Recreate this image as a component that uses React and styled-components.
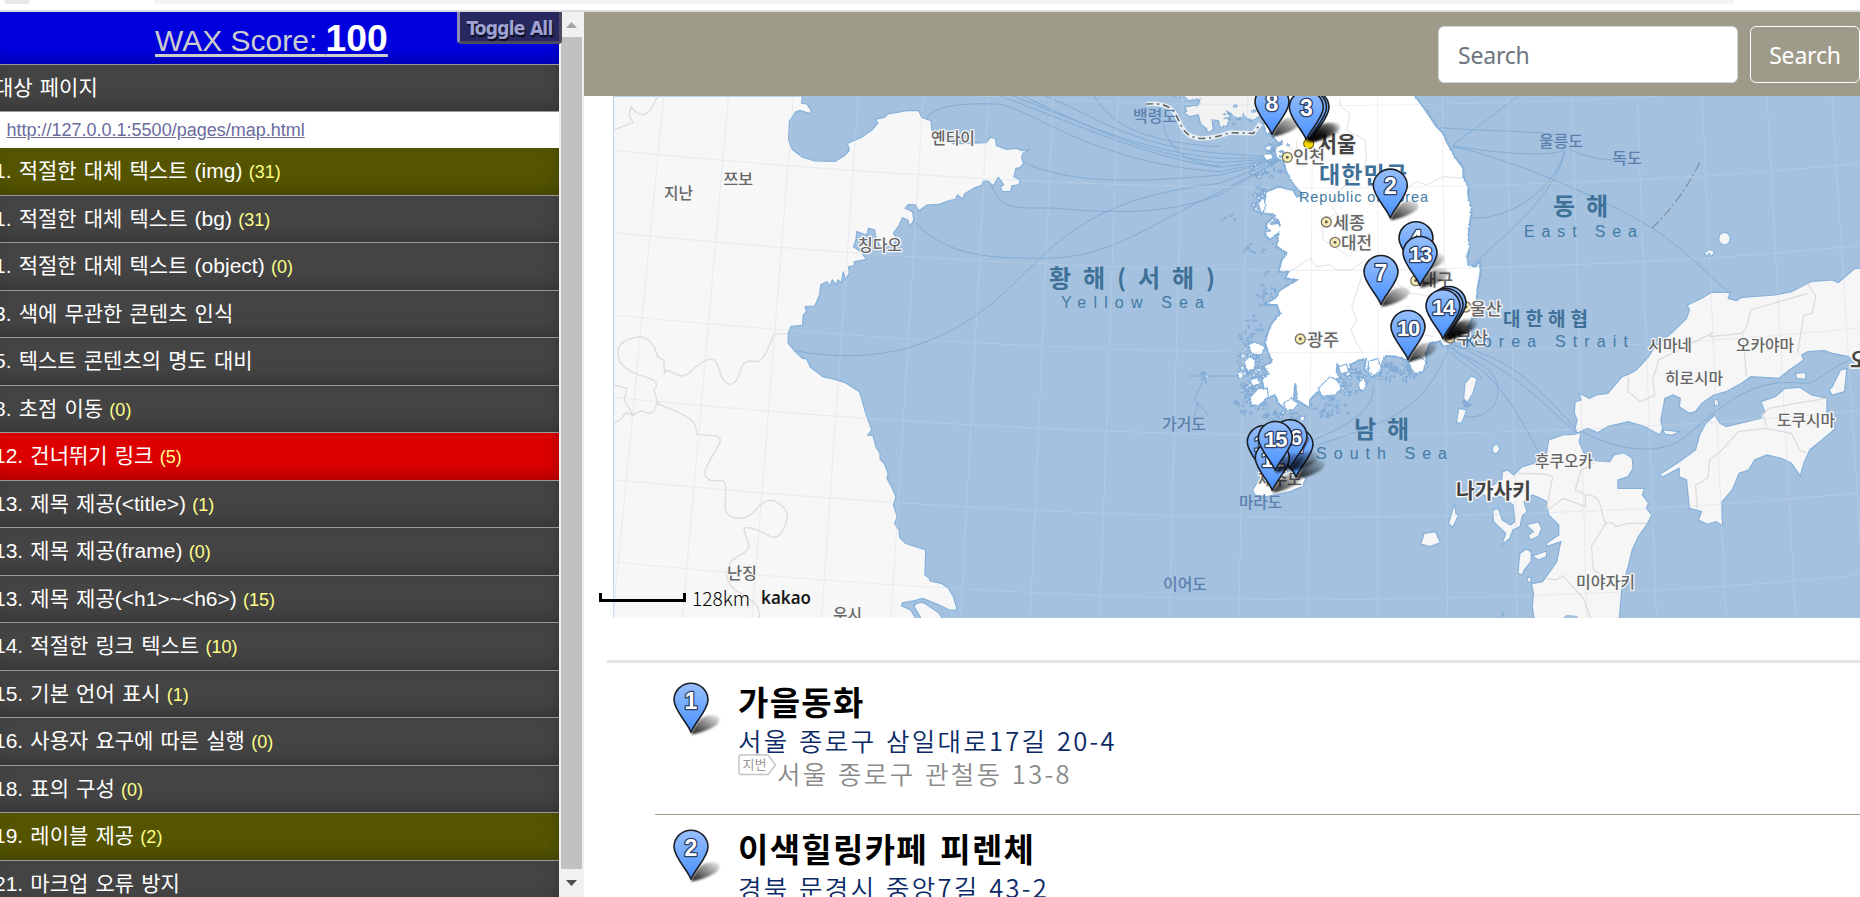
import React from 'react';
import styled, { createGlobalStyle } from 'styled-components';

const GlobalStyle = createGlobalStyle`
  * { box-sizing: border-box; }
  body { margin: 0; background: #fff; overflow: hidden; }
  h2, p { margin: 0; }
`;

const SANS = `"Liberation Sans", "Noto Sans CJK KR", sans-serif`;
const UI = `"Noto Sans", "Noto Sans CJK KR", sans-serif`;
const KR = `"Noto Sans CJK KR", sans-serif`;

/* ---------- frame ---------- */

const Page = styled.div`
  display: flex;
  flex-direction: column;
  width: 1860px;
  height: 897px;
  overflow: hidden;
`;

const BrowserEdge = styled.div`
  flex: none;
  display: flex;
  align-items: flex-start;
  gap: 124px;
  height: 12px;
  padding-left: 4px;
  border-bottom: 2px solid #dadce0;
`;

const ChromeShape = styled.div`
  width: ${(p) => p.$width}px;
  height: 4px;
  background: ${(p) => p.$color};
  border-radius: 0 0 ${(p) => p.$radius}px ${(p) => p.$radius}px;
`;

const Panes = styled.div`
  flex: 1;
  display: flex;
  min-height: 0;
`;

/* ---------- report panel ---------- */

const Report = styled.aside`
  position: relative;
  flex: none;
  width: 559px;
  overflow: visible;
  font-family: ${SANS};
`;

const ReportClip = styled.div`
  height: 885px;
  overflow: hidden;
`;

const inner = `box-shadow: inset -4px -8px 16px -4px rgba(0, 0, 0, 0.25);`;

const ScoreBar = styled.div`
  height: 53px;
  border-bottom: 1px solid #999;
  background: #0000df;
  ${inner}
  padding-left: 155px;
  color: #ccc;
  font-size: 30px;
  line-height: 52px;
  white-space: pre;
`;

const ScoreText = styled.span`
  text-decoration: underline;
  text-decoration-thickness: 3px;
  text-underline-offset: 3px;
  text-decoration-skip-ink: none;
`;

const ScoreValue = styled.strong`
  color: #fff;
  font-size: 37.3px;
`;

const ToggleAll = styled.button`
  position: absolute;
  top: 0;
  right: -3px;
  width: 105px;
  height: 32px;
  padding: 2px 0 0;
  border: 3px outset #8c8cb4;
  border-top: 0;
  border-radius: 0 0 4px 4px;
  background: #26285e;
  color: #9fa1d2;
  font: bold 19px/26px "DejaVu Sans Condensed", "DejaVu Sans", sans-serif;
  letter-spacing: -0.75px;
  white-space: nowrap;
  text-shadow: 1px 2px 1px #08081c;
  z-index: 2;
`;

const rowColors = { normal: '#444', warn: '#550', fail: '#d00' };

const Row = styled.div`
  height: ${(p) => (p.$head ? 47 : 47.5)}px;
  border-bottom: 1px solid #999;
  background: ${(p) => rowColors[p.$tone || 'normal']};
  ${inner}
  text-indent: -6px;
  color: #fff;
  font-size: 21px;
  line-height: 46px;
  word-spacing: 1.3px;
  white-space: pre;
`;

const Count = styled.span`
  color: #ffff88;
  font-size: 18px;
`;

const UrlRow = styled.div`
  height: 36.4px;
  padding-left: 6.5px;
  font-size: 18px;
  line-height: 36px;
`;

const UrlLink = styled.a`
  color: #6b6b9e;
  text-decoration: underline;
`;

const ScrollBar = styled.div`
  flex: none;
  display: flex;
  flex-direction: column;
  align-items: center;
  width: 25px;
  background: #f1f1f1;
`;

const ScrollArrow = styled.div`
  height: ${(p) => p.$height}px;
  display: flex;
  align-items: center;
  justify-content: center;
`;

const Thumb = styled.div`
  flex: 1;
  width: 21px;
  background: #c1c1c1;
`;

/* ---------- page content ---------- */

const Content = styled.main`
  flex: 1;
  min-width: 0;
  display: flex;
  flex-direction: column;
`;

const NavBar = styled.header`
  flex: none;
  height: 84px;
  background: #9f9b8a;
  display: flex;
  justify-content: flex-end;
  align-items: flex-start;
  gap: 12px;
  padding-top: 14px;
  font-family: ${UI};
  font-size: 23px;
`;

const SearchField = styled.input`
  width: 300px;
  height: 57px;
  padding: 0 19px;
  border: 1px solid #ced4da;
  border-radius: 6px;
  background: #fff;
  font: inherit;
  letter-spacing: -0.2px;
  &::placeholder { color: #6c757d; opacity: 1; }
`;

const SearchButton = styled.button`
  width: 110px;
  height: 57px;
  padding: 0;
  border: 1px solid #fff;
  border-radius: 6px;
  background: transparent;
  color: #fff;
  font: inherit;
  letter-spacing: -0.2px;
`;

const MapCanvas = styled.svg`
  flex: none;
  display: block;
  width: 1276px;
  height: 522px;
`;

const PlaceList = styled.section`
  flex: none;
  margin: 42px 0 0 23px;
  padding-left: 48px;
  border-top: 3px solid #e6e6e0;
`;

const Place = styled.article`
  display: flex;
  align-items: flex-start;
  height: ${(p) => (p.$first ? 152 : 147)}px;
  padding: ${(p) => (p.$first ? 17 : 12)}px 0 0 16px;
  border-bottom: 1px solid #9f9b8a;
  font-family: ${KR};
`;

const PinIcon = styled.svg`
  flex: none;
  width: 52px;
  height: 56px;
  margin-right: 15px;
  overflow: visible;
`;

const PlaceInfo = styled.div`
  display: flex;
  flex-direction: column;
`;

const PlaceName = styled.h2`
  font-size: 33px;
  font-weight: 700;
  line-height: 42px;
  letter-spacing: 1.3px;
  word-spacing: 3.5px;
  white-space: nowrap;
  color: #000;
`;

const RoadAddress = styled.p`
  font-size: 25.5px;
  line-height: 35px;
  letter-spacing: 2.3px;
  word-spacing: 1.6px;
  font-weight: 350;
  white-space: nowrap;
  color: #0b2a66;
`;

const LotAddress = styled(RoadAddress)`
  display: flex;
  line-height: 32px;
  color: #8a8a8a;
`;

const LotTag = styled.svg`
  width: 39px;
  height: 22px;
  margin-top: -3px;
`;

/* ---------- data ---------- */

const checks = [
  { label: '1. 적절한 대체 텍스트 (img)', count: 31, tone: 'warn' },
  { label: '1. 적절한 대체 텍스트 (bg)', count: 31 },
  { label: '1. 적절한 대체 텍스트 (object)', count: 0 },
  { label: '3. 색에 무관한 콘텐츠 인식' },
  { label: '5. 텍스트 콘텐츠의 명도 대비' },
  { label: '8. 초점 이동', count: 0 },
  { label: '12. 건너뛰기 링크', count: 5, tone: 'fail' },
  { label: '13. 제목 제공(<title>)', count: 1 },
  { label: '13. 제목 제공(frame)', count: 0 },
  { label: '13. 제목 제공(<h1>~<h6>)', count: 15 },
  { label: '14. 적절한 링크 텍스트', count: 10 },
  { label: '15. 기본 언어 표시', count: 1 },
  { label: '16. 사용자 요구에 따른 실행', count: 0 },
  { label: '18. 표의 구성', count: 0 },
  { label: '19. 레이블 제공', count: 2, tone: 'warn' },
  { label: '21. 마크업 오류 방지' },
];

const places = [
  { no: 1, name: '가을동화', road: '서울 종로구 삼일대로17길 20-4', lot: '서울 종로구 관철동 13-8' },
  { no: 2, name: '이색힐링카페 피렌체', road: '경북 문경시 중앙7길 43-2' },
];

/* text, left, right, bottom, size, kind */
const labels = [
  ['지난', 664, 693, 201, 16, 'town'],
  ['쯔보', 723.5, 753, 187, 16, 'town'],
  ['옌타이', 931, 975, 146, 16, 'town'],
  ['칭다오', 858, 902, 253, 16, 'town'],
  ['백령도', 1133, 1177, 124, 16, 'isle'],
  ['황 해 ( 서 해 )', 1049, 1215, 289, 24, 'sea'],
  ['Yellow Sea', 1061, 1204, 307.5, 16, 'seaEn'],
  ['서울', 1318, 1356, 154, 22, 'city'],
  ['인천', 1293, 1325, 165, 17, 'town'],
  ['대한민국', 1319, 1407, 185, 23, 'sea'],
  ['Republic of Korea', 1299, 1428, 202, 14.5, 'seaEn'],
  ['세종', 1333, 1365, 231, 17, 'town'],
  ['대전', 1341, 1372, 251, 17, 'town'],
  ['대구', 1421, 1453, 288, 17, 'town'],
  ['울산', 1470, 1502, 317, 17, 'town'],
  ['부산', 1456, 1488, 346, 17, 'town'],
  ['광주', 1307, 1339, 347.5, 17, 'town'],
  ['대한해협', 1503, 1588, 328, 19, 'sea'],
  ['Korea Strait', 1465, 1628, 347, 16, 'seaEn'],
  ['울릉도', 1539, 1583, 149, 16, 'isle'],
  ['독도', 1612, 1642, 166, 16, 'isle'],
  ['동 해', 1553, 1608, 217, 24, 'sea'],
  ['East Sea', 1524, 1637, 236.7, 16, 'seaEn'],
  ['시마네', 1648, 1692, 353, 16, 'town'],
  ['오카야마', 1736, 1794, 353, 16, 'town'],
  ['히로시마', 1665, 1723, 386, 16, 'town'],
  ['오사카', 1850, 1905, 370, 20, 'city'],
  ['도쿠시마', 1777, 1835, 427.5, 16, 'town'],
  ['후쿠오카', 1535, 1593, 469, 16, 'town'],
  ['나가사키', 1456, 1531, 500.5, 21, 'city'],
  ['미야자키', 1576, 1635, 590, 16, 'town'],
  ['남 해', 1354, 1409, 440, 24, 'sea'],
  ['South Sea', 1316, 1447, 459, 16, 'seaEn'],
  ['제주도', 1258, 1302, 487, 16, 'town'],
  ['마라도', 1239, 1282, 510, 16, 'isle'],
  ['가거도', 1162, 1206, 432, 16, 'isle'],
  ['이어도', 1163, 1207, 592, 16, 'isle'],
  ['난징', 727, 757, 581, 16, 'town'],
  ['우시', 833, 862, 622, 16, 'town'],
];

const labelKinds = {
  town: { fill: '#666', halo: '#f8f8f8', weight: 500, haloWidth: 2.5 },
  city: { fill: '#444', halo: '#f8f8f8', weight: 700, haloWidth: 3 },
  isle: { fill: '#5b80ad', halo: 'none', weight: 500, haloWidth: 0 },
  sea: { fill: '#3f7098', halo: 'none', weight: 700, haloWidth: 0 },
  seaEn: { fill: '#437aa5', halo: 'none', weight: 400, haloWidth: 0 },
};

const towns = [[1287.3, 157.3], [1326.3, 222], [1335, 242.3], [1415.7, 280.7], [1300.3, 339], [1466, 307], [1450, 338]];

const pins = [
  [1272, 135.7, 8], [1312, 141, 9], [1309.5, 141, 1], [1306.3, 141, 3], [1390.3, 219.3, 2], [1416, 272, 4],
  [1420, 286.7, 13], [1381, 305.7, 7], [1449, 336.7, 6], [1446, 338.7, 5], [1443, 340, 14], [1408, 360.7, 10],
  [1264.3, 475.7, 11], [1296, 478.3, 17], [1290, 470, 16], [1272.3, 491.7, 12], [1275.3, 471.7, 15],
];

/* ---------- map geometry ---------- */

const china = `M82 48 L545 48 L543 70 L556 72 L567 93 L562 101 L540 91 L528 96 L513 125 L511 180 L520 208 L545 232 L575 243 L625 244 L650 225 L660 210 L655 190 L690 172 L715 150 L730 128 L722 118 L745 112 L755 102 L800 92 L830 92 L837 112 L860 122 L862 150 L885 168 L915 192 L995 188 L1005 172 L1018 175 L1020 197 L1045 208 L1070 205 L1083 212 L1103 208 L1085 220 L1082 232 L1086 252 L1078 263 L1068 265 L1063 290 L1078 300 L1076 314 L1058 318 L1055 335 L1035 335 L1030 320 L1038 314 L1025 292 L1012 318 L1000 303 L988 303 L985 315 L965 325 L942 342 L938 358 L925 345 L920 358 L905 362 L880 373 L850 375 L830 393 L822 375 L805 373 L797 385 L815 395 L818 420 L808 440 L803 420 L790 413 L780 440 L768 460 L775 475 L770 490 L745 500 L735 498 L725 475 L722 450 L707 445 L702 465 L678 455 L676 480 L670 500 L688 515 L702 538 L672 545 L672 557 L658 560 L660 580 L650 598 L645 575 L640 608 L632 600 L628 615 L618 600 L612 618 L605 605 L590 615 L587 645 L575 678 L552 680 L555 695 L547 705 L545 735 L517 740 L510 760 L510 790 L525 812 L545 835 L555 837 L565 862 L595 890 L615 895 L650 908 L685 935 L700 1000 L715 1050 L705 1065 L718 1067 L725 1100 L735 1120 L735 1137 L745 1150 L755 1180 L752 1195 L765 1225 L774 1250 L768 1275 L777 1310 L771 1330 L782 1350 L783 1372 L797 1390 L847 1410 L845 1485 L856 1495 L858 1503 L885 1510 L903 1525 L915 1550 L924 1590 L905 1590 L880 1575 L840 1555 L820 1562 L790 1568 L788 1578 L810 1590 L825 1620 L82 1620 Z M818 1578 Q830 1562 845 1570 L880 1600 L890 1620 L838 1620 Z`;

const chinaBorders = `M190 48 C170 110 150 120 125 80 L120 105 L130 128 L82 150 M510 760 L475 763 C460 810 450 845 430 845 C380 830 400 910 368 913 C330 900 350 830 315 838 C280 850 270 890 250 888 C225 885 215 860 207 878 L205 840 L190 830 C180 780 160 770 143 770 C130 775 90 780 93 820 C95 850 110 865 120 870 C140 890 175 890 185 905 C195 930 175 920 182 935 L190 965 L180 995 C165 1010 160 990 148 993 L130 1005 L108 960 L115 925 L82 915 M130 1005 L112 998 L100 1018 L82 1032 M190 970 C240 1000 290 1010 285 1063 C330 1070 350 1060 342 1090 C320 1140 300 1170 308 1190 C325 1220 355 1180 357 1220 C360 1270 340 1310 390 1315 C430 1315 430 1270 460 1262 C480 1255 515 1290 507 1320 C495 1370 480 1380 460 1365 C430 1345 400 1335 402 1350 C410 1390 425 1400 400 1420 C350 1445 350 1500 380 1530 C420 1560 445 1570 438 1620`;

const westRoutes = `M850 115 C870 70 960 70 1020 72 C1100 78 1250 250 1568 275 L1715 238 M1030 48 C1150 100 1400 240 1568 262 L1715 236 M1060 48 C1200 110 1350 210 1568 235 L1715 234 M1085 48 C1230 130 1380 225 1568 248 L1715 235 M1140 48 C1250 100 1350 200 1568 220 L1715 232 M1260 48 C1300 140 1400 190 1568 200 M1430 135 C1440 200 1480 250 1568 258 M1088 248 C1200 310 1350 310 1568 285 L1715 240 M1005 310 C1040 400 1060 380 1170 385 C1350 405 1450 395 1568 345 L1715 240 M820 425 C900 530 1000 535 1140 535 C1300 535 1400 430 1568 335 L1715 242 M525 812 C700 850 850 820 1000 680 C1150 530 1200 360 1568 310 L1715 240 M1490 888 L1700 888 M1530 890 L1505 960 L1540 1005 M1515 965 L1505 1010`;

const eastRoutes = `M732 48 L570 195 M540 143 C650 155 750 150 830 165 M570 197 C650 215 800 235 845 210 M570 200 C700 230 950 360 1060 445 C1150 520 1200 590 1250 640 M845 215 C800 380 650 430 610 410 M845 215 C820 350 700 460 620 555 M860 210 Q900 235 960 240 M560 800 C640 870 680 880 780 1115 M570 795 C700 850 780 960 875 1060 M575 795 C740 840 800 960 880 1055 M565 800 C620 850 690 860 680 950 C670 1000 630 1015 605 1010 M560 805 C500 1000 400 1030 240 1095 M555 802 C590 860 640 870 640 900 M1600 820 C1500 840 1470 915 1430 910 C1300 890 1230 980 1150 1060 C1100 1120 1000 1130 880 1050 M375 920 C380 1000 300 1040 230 1080`;

const honshu = `M1600 560 L1555 566 L1515 608 L1500 600 L1450 604 L1400 635 L1360 645 L1280 652 L1265 662 L1245 655 L1250 637 L1205 637 L1180 655 L1145 675 L1150 690 L1143 715 L1110 755 L1065 800 L1050 830 L1020 870 L1000 883 L985 890 L950 940 L922 945 L905 955 L880 940 L885 960 L870 965 L868 1000 L875 1020 L870 1045 L875 1060 L900 1045 L925 1058 L950 1040 L1000 1025 L1040 1040 L1078 1065 L1085 1045 L1080 1020 L1090 955 L1110 945 L1128 955 L1125 980 L1150 1000 L1165 995 L1180 970 L1210 945 L1240 935 L1280 908 L1300 890 L1370 895 L1395 870 L1430 840 L1425 825 L1440 815 L1480 812 L1500 820 L1540 830 L1555 850 L1600 855 Z`;
const shikoku = `M1212 1005 L1225 1030 L1240 1040 L1325 1015 L1335 995 L1325 965 L1360 950 L1385 925 L1420 922 L1450 945 L1487 955 L1487 1000 L1508 1045 L1475 1080 L1445 1110 L1430 1150 L1422 1188 L1400 1150 L1375 1135 L1340 1125 L1310 1140 L1295 1170 L1272 1180 L1255 1230 L1230 1265 L1230 1310 L1232 1337 L1215 1325 L1195 1333 L1172 1320 L1180 1295 L1150 1285 L1143 1200 L1125 1190 L1125 1165 L1085 1190 L1075 1185 L1125 1145 L1165 1110 L1175 1065 L1190 1030 Z`;
const kyushu = `M885 1057 L880 1085 L890 1115 L900 1135 L925 1143 L955 1145 L965 1125 L990 1118 L1010 1135 L1012 1165 L1000 1190 L975 1200 L975 1225 L1000 1225 L1040 1225 L1035 1245 L1050 1270 L1045 1285 L1058 1305 L1045 1335 L1025 1370 L1010 1410 L1000 1460 L985 1520 L978 1620 L770 1620 L765 1580 L768 1540 L763 1512 L790 1505 L805 1480 L825 1445 L835 1385 L800 1400 L800 1390 L830 1365 L830 1335 L805 1305 L800 1265 L785 1255 L765 1245 L745 1265 L752 1295 L740 1310 L735 1340 L718 1350 L710 1375 L690 1395 L700 1360 L670 1325 L668 1290 L682 1285 L692 1320 L712 1335 L722 1325 L718 1275 L690 1250 L660 1255 L625 1230 L665 1218 L690 1200 L692 1175 L705 1170 L720 1185 L740 1160 L770 1150 L800 1120 L805 1080 L840 1065 L865 1063 Z`;
const islets = `M500 1360 L528 1355 L540 1388 L515 1400 L492 1392Z M575 1270 L578 1300 L585 1305 L570 1342 L560 1330 L566 1305Z M750 1335 L780 1325 L788 1345 L780 1370 L760 1380 L755 1365 L768 1355Z M735 1420 L750 1407 L763 1415 L762 1445 L745 1470 L740 1485 L730 1480 L732 1450Z M765 1428 L800 1413 L800 1430 L780 1440Z M752 1492 L762 1492 L762 1507 L755 1507Z M600 910 L615 888 L630 895 L620 940 L605 970 L597 955Z M585 985 L605 990 L592 1030 L579 1028Z M668 1100 L678 1090 L686 1108 L676 1123 L667 1115Z M1500 920 L1520 870 L1536 865 L1530 935 L1500 945 L1492 930Z M1410 880 L1435 877 L1435 898 L1412 895Z M1085 1050 L1105 1052 L1125 1055 L1108 1066 L1090 1062Z M1210 960 L1220 958 L1222 975 L1212 978Z M1186 518 L1200 508 L1212 515 L1205 530 L1198 520 L1193 530Z M686 1620 L695 1595 L694 1613Z`;
const eastBorders = `M1440 610 L1460 650 L1450 700 L1430 705 L1415 820 M1440 640 L1300 690 L1290 740 L1280 760 L1290 890 M1280 760 L1200 770 L1205 760 L1140 800 L1075 840 L1060 900 L1065 945 L1030 965 L1000 935 L1000 890 M1325 1010 L1345 985 L1410 970 L1487 955 M1340 1040 L1330 1005 M1335 1045 L1270 1055 L1230 1110 L1200 1140 L1195 1195 L1165 1215 L1170 1290 M1335 1045 L1400 1060 L1420 1110 L1440 1120 M730 1180 L795 1182 L815 1190 L800 1290 M805 1290 L840 1255 L895 1280 L895 1245 L870 1230 L885 1170 L925 1143 M895 1245 C940 1240 930 1300 945 1330 L960 1328 L970 1340 L1000 1330 L1045 1330 M945 1330 L910 1400 L915 1470 L930 1480 M800 1495 L825 1500 L840 1487 L890 1555 L910 1620`;

const northKorea = `M60 10 L80 22 L100 18 L115 32 L150 28 L145 45 L105 50 L110 65 L100 68 L120 80 L145 75 L150 98 L178 128 L190 118 L186 90 L205 92 L210 112 L232 106 L240 80 L230 62 L260 85 L285 80 L300 95 L345 70 L345 10 Z`;
const southKorea = `M345 10 L790 10 L830 65 L860 110 L880 130 L890 155 L915 200 L940 235 L940 260 L955 290 L955 320 L965 355 L960 400 L955 440 L960 470 L952 500 L955 525 L975 530 L990 515 L992 545 L982 600 L980 640 L965 690 L940 740 L900 765 L880 770 L870 755 L840 760 L828 790 L832 830 L812 850 L790 836 L775 838 L780 815 L740 800 L705 798 L697 820 L690 855 L665 862 L642 835 L648 808 L625 812 L600 825 L608 850 L590 862 L562 825 L560 845 L582 880 L572 905 L545 915 L520 925 L503 905 L480 930 L480 955 L440 930 L436 880 L430 945 L405 958 L385 940 L375 915 L350 925 L330 945 L298 930 L310 905 L340 890 L335 865 L355 850 L340 830 L365 815 L355 790 L345 760 L350 735 L365 700 L390 670 L380 645 L335 645 L375 625 L390 600 L440 570 L405 565 L415 545 L385 545 L395 510 L410 490 L380 470 L385 430 L360 450 L345 435 L350 400 L375 375 L340 370 L310 360 L325 330 L350 305 L385 290 L430 300 L440 320 L460 315 L435 290 L410 250 L400 215 L380 205 L370 170 L390 165 L360 130 L345 100 Z`;
const coastalIsles = `M298 925 L325 895 L352 895 L355 920 L330 945 L305 945Z M282 815 L300 800 L318 812 L312 838 L292 842Z M295 765 L315 755 L345 770 L335 795 L305 790Z M262 848 L275 842 L280 862 L266 866Z M300 870 L322 862 L330 882 L308 888Z M400 940 L425 925 L445 940 L430 960 L405 958Z M505 895 L540 860 L560 870 L575 895 L555 915 L515 918Z M625 880 L640 862 L650 885 L640 902 L628 898Z M565 830 L590 822 L596 846 L572 852Z M775 815 L805 800 L828 812 L820 845 L790 850Z M655 815 L685 805 L695 840 L672 858 L655 842Z M450 980 L465 978 L462 992 L450 990Z M338 195 L362 190 L370 205 L350 212Z M345 170 L365 165 L362 180 L348 182Z M325 340 L340 322 L348 350 L335 375Z M340 100 L362 95 L368 120 L350 135Z`;
const koreaBorders = `M570 25 L572 50 L600 70 L590 120 L645 150 L650 200 L640 240 L570 300 L545 350 L560 370 L515 395 L520 450 L600 500 L620 455 L640 440 M440 150 L440 190 L410 165 M720 290 L770 295 L800 275 L830 285 L880 260 L940 265 M420 545 L450 525 L480 505 L500 530 L540 525 L560 540 L600 540 L640 515 M635 560 L605 650 L620 690 L603 720 L620 760 L640 790 M740 580 L780 610 L860 620 M800 730 L850 740`;
const jeju = `M308 1200 L320 1180 L350 1160 L400 1145 L450 1150 L468 1165 L455 1190 L420 1205 L350 1220 L315 1215 Z`;

/* Deterministic scatter of small islands along the coast: cx, cy, rx, ry, count, size */
const clusters = [
  [300, 840, 42, 85, 60, 8], [300, 945, 50, 28, 26, 5], [400, 980, 60, 22, 26, 5], [540, 955, 60, 35, 26, 5],
  [605, 875, 45, 42, 30, 6], [740, 845, 70, 34, 44, 5], [305, 730, 38, 55, 18, 4], [345, 600, 34, 55, 18, 4],
  [310, 480, 35, 25, 10, 3], [325, 330, 25, 40, 20, 6], [345, 240, 50, 26, 24, 5], [385, 175, 35, 30, 16, 5],
  [240, 380, 50, 12, 6, 3], [163, 860, 12, 22, 8, 4], [270, 75, 60, 30, 10, 4], [370, 420, 20, 50, 10, 5],
  [945, 940, 18, 12, 8, 4],
];
const scatter = (() => {
  let seed = 41;
  const rnd = () => {
    seed = (seed * 16807) % 2147483647;
    return seed / 2147483647;
  };
  const out = [];
  clusters.forEach(([cx, cy, rx, ry, n, s]) => {
    for (let i = 0; i < n; i += 1) {
      const a = rnd() * Math.PI * 2;
      const r = Math.sqrt(rnd());
      const x = cx + Math.cos(a) * r * rx;
      const y = cy + Math.sin(a) * r * ry;
      const w = s * (0.4 + rnd() * 1.1);
      const h = s * (0.4 + rnd() * 1.1);
      out.push(`M${(x - w).toFixed(1)} ${y.toFixed(1)}l${w.toFixed(1)} ${(-h).toFixed(1)}l${w.toFixed(1)} ${(h * 0.7).toFixed(1)}l${(-w * 0.6).toFixed(1)} ${h.toFixed(1)}z`);
    }
  });
  return out.join('');
})();

const meridians = Array.from({ length: 20 }, (_, i) => `M${205 + 159 * i} 48 L${80 + 170.5 * i} 1620`).join('');
const parallels = [-247, 0, 247, 494, 741, 988, 1235]
  .map((d) => `M82 ${211 + d} C700 ${285 + d} 1400 ${335 + d} 2000 ${322 + d} C2500 ${310 + d} 2800 ${290 + d} 3136 ${250 + d}`)
  .join('');

/* ---------- drawings ---------- */

function PinDefs() {
  return (
    <defs>
      <linearGradient id="pinFill" x1="0" y1="0" x2="0" y2="1">
        <stop offset="0" stopColor="#97bffb" />
        <stop offset="0.75" stopColor="#5b9cff" />
        <stop offset="1" stopColor="#3f86f5" />
      </linearGradient>
      <linearGradient id="pinShade" x1="0" y1="1" x2="1" y2="0">
        <stop offset="0" stopColor="#000" stopOpacity="0.9" />
        <stop offset="0.9" stopColor="#000" stopOpacity="0.15" />
      </linearGradient>
      <filter id="pinSoft" x="-30%" y="-30%" width="160%" height="160%">
        <feGaussianBlur stdDeviation="1.2" />
      </filter>
    </defs>
  );
}

function Pin({ x, y, no }) {
  return (
    <g transform={`translate(${x} ${y})`}>
      <path d="M0 1 C3 -7 9 -18 19 -18 C28 -19 31 -14 26 -9 C20 -4 8 0 0 1Z" fill="url(#pinShade)" filter="url(#pinSoft)" />
      <path
        d="M0 -1 C-2 -9 -17 -23 -17 -33.5 A17 16.7 0 0 1 17 -33.5 C17 -23 2 -9 0 -1Z"
        fill="url(#pinFill)"
        stroke="#1c1f26"
        strokeWidth="1.6"
      />
      <text
        x="0"
        y="-25"
        textAnchor="middle"
        fontFamily="Liberation Sans, sans-serif"
        fontWeight="700"
        fontSize={no > 9 ? 22 : 23}
        letterSpacing={no > 9 ? -1.2 : 0}
        fill="#fff"
        stroke="#2c3e66"
        strokeWidth="2.6"
        strokeLinejoin="round"
        paintOrder="stroke"
      >
        {no}
      </text>
    </g>
  );
}

function MapLabel({ item }) {
  const [text, left, right, bottom, size, kind] = item;
  const k = labelKinds[kind];
  return (
    <text
      x={left}
      y={kind === 'seaEn' ? bottom : bottom - size * 0.1}
      textLength={right - left}
      lengthAdjust={kind === 'town' || kind === 'city' || kind === 'isle' ? 'spacingAndGlyphs' : 'spacing'}
      fontFamily={kind === 'seaEn' ? 'Liberation Sans Narrow, Liberation Sans, sans-serif' : 'Noto Sans CJK KR, sans-serif'}
      fontSize={size}
      fontWeight={k.weight}
      fill={k.fill}
      stroke={k.halo}
      strokeWidth={k.haloWidth}
      strokeLinejoin="round"
      paintOrder="stroke"
    >
      {text}
    </text>
  );
}

const shore = { stroke: '#86b1db', strokeWidth: 1.2, vectorEffect: 'non-scaling-stroke' };
const hair = { fill: 'none', vectorEffect: 'non-scaling-stroke' };

function KoreaMap() {
  return (
    <MapCanvas viewBox="584 96 1276 522">
      <PinDefs />
      <defs>
        <filter id="coast" x="-5%" y="-5%" width="110%" height="110%">
          <feTurbulence type="fractalNoise" baseFrequency="0.16" numOctaves="2" seed="4" />
          <feDisplacementMap in="SourceGraphic" scale="8" xChannelSelector="R" yChannelSelector="G" />
        </filter>
      </defs>
      <rect x="584" y="96" width="1276" height="522" fill="#fff" />
      <rect x="613.5" y="96" width="1247" height="522" fill="#a4c2df" />

      <g transform="translate(580 80) scale(0.40816 0.33333)">
        <path d={westRoutes} {...hair} stroke="#82acd5" strokeWidth="1" />
        <path d={china} fill="#f7f7f7" {...shore} />
        <path d={chinaBorders} {...hair} stroke="#dddddd" strokeWidth="1.4" />
      </g>

      <g transform="translate(1220 80) scale(0.40816 0.33333)">
        <path d={eastRoutes} {...hair} stroke="#82acd5" strokeWidth="1" />
        <path d="M1175 248 Q1130 360 1058 445" {...hair} stroke="#7e8fa3" strokeWidth="1.2" strokeDasharray="10 3 2 3" />
        {[honshu, shikoku, kyushu, islets].map((d) => (
          <path key={d.slice(0, 12)} d={d} fill="#f6f6f6" {...shore} />
        ))}
        <ellipse cx="1236" cy="476" rx="14" ry="19" fill="#f6f6f6" {...shore} />
        <path d="M835 1620 L850 1604 L875 1608 L880 1620Z" fill="#a4c2df" />
        <path d={eastBorders} {...hair} stroke="#dcdcdc" strokeWidth="1.3" />
      </g>

      <g transform="translate(1150 90) scale(0.33333)">
        <g filter="url(#coast)">
          <path d={northKorea} fill="#f2f2f2" {...shore} />
          <path d={southKorea} fill="#fff" {...shore} strokeWidth="2" />
          <path d={scatter} fill="#d5e3f1" stroke="#82abd5" strokeWidth="1.1" vectorEffect="non-scaling-stroke" />
          <path d={coastalIsles} fill="#fff" {...shore} />
        </g>
        <path d={jeju} fill="#fff" {...shore} />
        <path d={koreaBorders} {...hair} stroke="#e2e2e2" strokeWidth="1" />
        <path d="M-12 42 C70 35 75 70 95 110 C120 160 180 148 240 128 L310 130 L332 100" {...hair} stroke="#e6eef6" strokeWidth="4.5" />
        <path d="M-12 42 C70 35 75 70 95 110 C120 160 180 148 240 128 L310 130 L332 100" {...hair} stroke="#666" strokeWidth="1.6" strokeDasharray="7 4 2 4" />
      </g>

      <g transform="translate(580 80) scale(0.40816 0.33333)">
        <path d={meridians + parallels} {...hair} stroke="#c9d6e4" strokeOpacity="0.34" strokeWidth="1.1" />
      </g>
      <rect x="584" y="96" width="29.5" height="522" fill="#fff" />

      {towns.map(([x, y]) => (
        <g key={x}>
          <circle cx={x} cy={y} r="5" fill="#f6eab0" stroke="#77746a" strokeWidth="1.3" />
          <circle cx={x} cy={y} r="1.4" fill="#555" />
        </g>
      ))}
      <circle cx="1308.7" cy="143.7" r="5" fill="#f5d400" stroke="#7a6a10" strokeWidth="1.2" />
      {labels.map((item) => (
        <MapLabel key={item[0]} item={item} />
      ))}
      {pins.map(([x, y, no]) => (
        <Pin key={no} x={x} y={y} no={no} />
      ))}

      <path d="M600.5 593 V600.5 H684.5 V593" fill="none" stroke="#000" strokeWidth="3" />
      <text x="692" y="605.5" textLength="58" lengthAdjust="spacingAndGlyphs" fontFamily="Noto Sans CJK KR, sans-serif" fontSize="19.5" fontWeight="300" fill="#000">
        128km
      </text>
      <text x="761" y="604" textLength="50" lengthAdjust="spacingAndGlyphs" fontFamily="Noto Sans, sans-serif" fontSize="18.5" fontWeight="600" fill="#1a1a1a">
        kakao
      </text>
    </MapCanvas>
  );
}

function PlaceItem({ place, first }) {
  return (
    <Place $first={first}>
      <PinIcon viewBox="0 0 52 56">
        <Pin x={20} y={53.5} no={place.no} />
      </PinIcon>
      <PlaceInfo>
        <PlaceName>{place.name}</PlaceName>
        <RoadAddress>{place.road}</RoadAddress>
        {place.lot && (
          <LotAddress>
            <LotTag viewBox="0 0 39 22">
              <path d="M2.5 1 H30 L37.5 11 L30 20.5 H2.5 Q1 20.5 1 19 V2.5 Q1 1 2.5 1Z" fill="#fff" stroke="#c4c4c4" strokeWidth="1.4" />
              <text x="4.5" y="15.2" textLength="24" lengthAdjust="spacingAndGlyphs" letterSpacing="0" fontFamily="Noto Sans CJK KR, sans-serif" fontSize="13" fontWeight="400" fill="#999">
                지번
              </text>
            </LotTag>
            <span>{place.lot}</span>
          </LotAddress>
        )}
      </PlaceInfo>
    </Place>
  );
}

export default function App() {
  return (
    <Page>
      <GlobalStyle />
      <BrowserEdge>
        <ChromeShape $width={26} $color="#e8e8e8" $radius={13} />
        <ChromeShape $width={1580} $color="#f1f3f4" $radius={10} />
      </BrowserEdge>
      <Panes>
        <Report>
          <ReportClip>
            <ScoreBar>
              <ScoreText>
                WAX Score: <ScoreValue>100</ScoreValue>
              </ScoreText>
            </ScoreBar>
            <Row $head>대상 페이지</Row>
            <UrlRow>
              <UrlLink>http://127.0.0.1:5500/pages/map.html</UrlLink>
            </UrlRow>
            {checks.map((c) => (
              <Row key={c.label} $tone={c.tone}>
                {c.label}
                {c.count !== undefined && <Count> ({c.count})</Count>}
              </Row>
            ))}
          </ReportClip>
          <ToggleAll>Toggle All</ToggleAll>
        </Report>
        <ScrollBar>
          <ScrollArrow $height={25}>
            <svg width="11" height="6" viewBox="0 0 11 6"><path d="M0 6 L5.5 0 L11 6Z" fill="#a3a3a3" /></svg>
          </ScrollArrow>
          <Thumb />
          <ScrollArrow $height={28}>
            <svg width="11" height="6" viewBox="0 0 11 6"><path d="M0 0 L5.5 6 L11 0Z" fill="#505050" /></svg>
          </ScrollArrow>
        </ScrollBar>
        <Content>
          <NavBar>
            <SearchField placeholder="Search" />
            <SearchButton>Search</SearchButton>
          </NavBar>
          <KoreaMap />
          <PlaceList>
            {places.map((p, i) => (
              <PlaceItem key={p.no} place={p} first={i === 0} />
            ))}
          </PlaceList>
        </Content>
      </Panes>
    </Page>
  );
}
